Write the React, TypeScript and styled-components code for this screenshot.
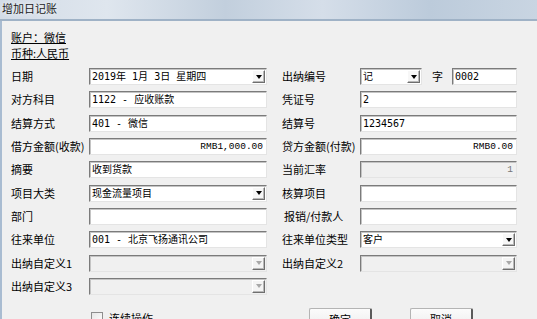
import React from 'react';
import styled, { createGlobalStyle } from 'styled-components';

const Global = createGlobalStyle`
  html, body { margin: 0; padding: 0; background: #f0f0f0; }
  body { width: 537px; height: 319px; overflow: hidden; font-family: "Noto Sans CJK SC", sans-serif; }
`;

const Window = styled.div`
  width: 537px;
  height: 319px;
  display: flex;
  flex-direction: column;
  background: #f0f0f0;
  overflow: hidden;
`;

const TitleBar = styled.div`
  flex: none;
  height: 19px;
  padding-left: 2px;
  background: linear-gradient(90deg, #d3dce7 0%, #dfe6ee 20%, #c2cfdd 42%, #d5dee9 60%, #bccbdb 80%, #c9d5e2 100%);
  border-bottom: 2px solid #9fb2c6;
  font-size: 11px;
  line-height: 17px;
  color: #1c1c1c;
  text-shadow: 0 0 4px #ffffff;
`;

const Body = styled.div`
  flex: 1;
  border-left: 2px solid #a9bcd1;
  padding: 7.5px 0 0 9px;
`;

const InfoLine = styled.div`
  height: 16px;
  font-size: 11px;
  line-height: 16px;
  color: #000;
  text-decoration: underline;
  text-underline-offset: 1px;
`;

const FormGrid = styled.div`
  margin-top: 7.5px;
  display: grid;
  grid-template-columns: 78px 178px 15px 78px 157px;
  grid-auto-rows: 17px;
  row-gap: 6.333px;
  align-items: center;
`;

const Label = styled.div<{ $col: number; $indent?: boolean }>`
  grid-column: ${(p) => p.$col};
  padding-left: ${(p) => (p.$indent ? '2px' : '0')};
  font-size: 11px;
  line-height: 17px;
  white-space: nowrap;
  color: #000;
`;

const Cell = styled.div<{ $col: number }>`
  grid-column: ${(p) => p.$col};
  height: 17px;
  display: flex;
  align-items: center;
`;

const Box = styled.div<{ $disabled?: boolean; $w?: number }>`
  box-sizing: border-box;
  height: 17px;
  ${(p) => (p.$w ? `width: ${p.$w}px; flex: none;` : 'flex: 1;')}
  display: flex;
  align-items: center;
  border: 1px solid;
  border-color: #7b7b7b #e4e4e4 #e4e4e4 #7b7b7b;
  box-shadow: inset 1px 1px 0 #c4c4c4;
  background: ${(p) => (p.$disabled ? '#f0f0f0' : '#ffffff')};
  overflow: hidden;
`;

const BoxText = styled.span<{ $mono?: boolean; $right?: boolean; $dim?: boolean }>`
  flex: 1;
  padding: ${(p) => (p.$right ? '0 3px 0 0' : '0 0 0 2px')};
  text-align: ${(p) => (p.$right ? 'right' : 'left')};
  font-family: ${(p) =>
    p.$mono ? '"Liberation Mono", monospace' : '"DejaVu Sans Mono", "Noto Sans CJK SC", monospace'};
  font-size: ${(p) => (p.$mono ? '9.5px' : '10px')};
  line-height: 15px;
  white-space: pre;
  color: ${(p) => (p.$dim ? '#777' : '#000')};
`;

const DropButton = styled.div<{ $disabled?: boolean }>`
  flex: none;
  box-sizing: border-box;
  width: 13px;
  height: 13px;
  margin-right: 1px;
  display: flex;
  align-items: center;
  justify-content: center;
  background: ${(p) => (p.$disabled ? '#f4f4f4' : '#f7f7f7')};
  border: 1px solid;
  border-color: #ffffff #6e6e6e #6e6e6e #ffffff;
  box-shadow: inset -1px -1px 0 #b8b8b8;
`;

const Arrow = styled.div<{ $disabled?: boolean }>`
  width: 0;
  height: 0;
  border-left: 3.5px solid transparent;
  border-right: 3.5px solid transparent;
  border-top: 4px solid ${(p) => (p.$disabled ? '#a8a8a8' : '#000')};
`;

const ZiLabel = styled.span`
  flex: none;
  width: 30px;
  padding-left: 10px;
  box-sizing: border-box;
  font-size: 11px;
  line-height: 17px;
`;

const Footer = styled.div`
  margin-top: 13px;
  display: grid;
  grid-template-columns: 298px 63px 38px 63px;
  align-items: start;
`;

const CheckRow = styled.label`
  padding: 4px 0 0 80px;
  display: flex;
  align-items: center;
  font-size: 11px;
  line-height: 13px;
`;

const CheckBox = styled.span`
  box-sizing: border-box;
  width: 12px;
  height: 12px;
  margin-right: 6px;
  border: 1px solid #8e8e8e;
  background: linear-gradient(135deg, #e6e6e6, #ffffff);
`;

const Button = styled.div<{ $col: number }>`
  grid-column: ${(p) => p.$col};
  box-sizing: border-box;
  height: 22px;
  border: 1px solid #b4b4b4;
  border-right: 2px solid #5a5a5a;
  border-radius: 2px;
  background: linear-gradient(#fbfbfb, #ececec);
  font-size: 11px;
  line-height: 20px;
  text-align: center;
`;

type Field =
  | { kind: 'text'; value?: string; disabled?: boolean }
  | { kind: 'amount'; value: string; disabled?: boolean }
  | { kind: 'combo'; value?: string; disabled?: boolean }
  | { kind: 'number' };

type Row = { left: [string, Field]; right?: [string, Field, boolean?] };

const rows: Row[] = [
  { left: ['日期', { kind: 'combo', value: '2019年 1月 3日 星期四' }], right: ['出纳编号', { kind: 'number' }] },
  { left: ['对方科目', { kind: 'text', value: '1122 - 应收账款' }], right: ['凭证号', { kind: 'text', value: '2' }] },
  { left: ['结算方式', { kind: 'text', value: '401 - 微信' }], right: ['结算号', { kind: 'text', value: '1234567' }] },
  { left: ['借方金额(收款)', { kind: 'amount', value: 'RMB1,000.00' }], right: ['贷方金额(付款)', { kind: 'amount', value: 'RMB0.00' }] },
  { left: ['摘要', { kind: 'text', value: '收到货款' }], right: ['当前汇率', { kind: 'amount', value: '1', disabled: true }] },
  { left: ['项目大类', { kind: 'combo', value: '现金流量项目' }], right: ['核算项目', { kind: 'text' }] },
  { left: ['部门', { kind: 'text' }], right: ['报销/付款人', { kind: 'text' }, true] },
  { left: ['往来单位', { kind: 'text', value: '001 - 北京飞扬通讯公司' }], right: ['往来单位类型', { kind: 'combo', value: '客户' }] },
  { left: ['出纳自定义1', { kind: 'combo', disabled: true }], right: ['出纳自定义2', { kind: 'combo', disabled: true }] },
  { left: ['出纳自定义3', { kind: 'combo', disabled: true }] },
];

const Combo: React.FC<{ value?: string; disabled?: boolean; w?: number }> = ({ value, disabled, w }) => (
  <Box $disabled={disabled} $w={w}>
    <BoxText>{value}</BoxText>
    <DropButton $disabled={disabled}>
      <Arrow $disabled={disabled} />
    </DropButton>
  </Box>
);

const renderField = (f: Field) => {
  switch (f.kind) {
    case 'text':
      return (
        <Box $disabled={f.disabled}>
          <BoxText>{f.value}</BoxText>
        </Box>
      );
    case 'amount':
      return (
        <Box $disabled={f.disabled}>
          <BoxText $mono $right $dim={f.disabled}>{f.value}</BoxText>
        </Box>
      );
    case 'combo':
      return <Combo value={f.value} disabled={f.disabled} />;
    case 'number':
      return (
        <>
          <Combo value="记" w={62} />
          <ZiLabel>字</ZiLabel>
          <Box>
            <BoxText>0002</BoxText>
          </Box>
        </>
      );
  }
};

export default function App() {
  return (
    <Window>
      <Global />
      <TitleBar>增加日记账</TitleBar>
      <Body>
        <InfoLine>账户：微信</InfoLine>
        <InfoLine>币种:人民币</InfoLine>
        <FormGrid>
          {rows.map((r, i) => (
            <React.Fragment key={i}>
              <Label $col={1}>{r.left[0]}</Label>
              <Cell $col={2}>{renderField(r.left[1])}</Cell>
              {r.right && (
                <>
                  <Label $col={4} $indent={r.right[2]}>{r.right[0]}</Label>
                  <Cell $col={5}>{renderField(r.right[1])}</Cell>
                </>
              )}
            </React.Fragment>
          ))}
        </FormGrid>
        <Footer>
          <CheckRow>
            <CheckBox />
            连续操作
          </CheckRow>
          <Button $col={2}>确定</Button>
          <Button $col={4}>取消</Button>
        </Footer>
      </Body>
    </Window>
  );
}
